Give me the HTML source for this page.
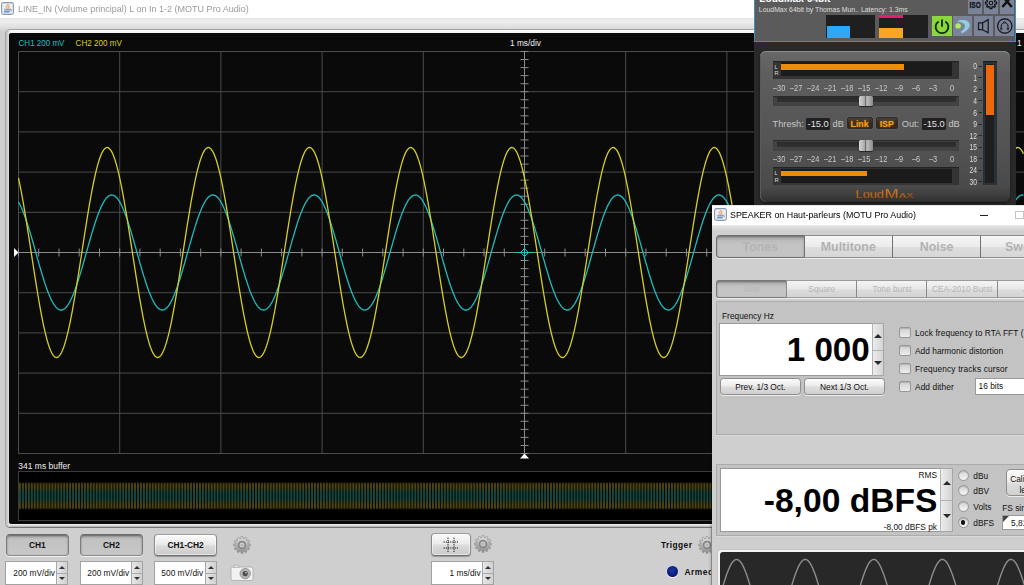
<!DOCTYPE html>
<html><head><meta charset="utf-8"><title>scope</title>
<style>
*{box-sizing:border-box;margin:0;padding:0}
html,body{width:1024px;height:585px;overflow:hidden;background:#cfcfcf;font-family:"Liberation Sans",sans-serif;font-size:8.35px;color:#111}
.abs{position:absolute}
#main{position:absolute;left:0;top:0;width:1024px;height:585px;background:#cfcfcf}
#mtitle{position:absolute;left:0;top:0;width:1024px;height:18px;background:#fff}
#mtitle .t{position:absolute;left:18px;top:3.2px;font-size:9.6px;color:#9a9a9a;white-space:nowrap;transform:scaleX(.94);transform-origin:0 0}
#mband{position:absolute;left:0;top:18px;width:1024px;height:14px;background:linear-gradient(#e4e4e4 0,#eeeeee 20%,#e2e2e2 60%,#d6d6d6 85%,#cfcfcf 100%)}
#spanel{position:absolute;left:5px;top:29px;width:1030px;height:499px;border-radius:5px;background:linear-gradient(90deg,#bcbcbc 0,#e0e0e0 3px,rgba(224,224,224,0) 5px),linear-gradient(#fafafa,#f4f4f4 3px,#e4e4e4 6px,#e4e4e4 488px,#f4f4f4 493.6px,#f0f0f0 494.4px,#b2b2b2 497px);border:1px solid #a4a4a4;border-bottom-color:#747474}
#sblack{position:absolute;left:9px;top:33px;width:1020px;height:491px;border-radius:3px;background:#0a0a0a;overflow:hidden}
svg.scope{position:absolute;left:0;top:0}
.st{font-family:"Liberation Sans",sans-serif;font-size:8.35px}
.btn{position:absolute;border:1px solid #8e8e8e;border-color:#9c9c9c #8c8c8c #707070;border-radius:4px;background:linear-gradient(#fbfbfb,#ebebeb 45%,#dbdbdb 55%,#cacaca);box-shadow:0 1px 1px rgba(0,0,0,.28), inset 0 0 0 1px rgba(255,255,255,.5);text-align:center;font-weight:bold;font-size:8.4px;color:#111;white-space:nowrap}
.btn.on{background:linear-gradient(#a4a4a4,#c2c2c2 22%,#c7c7c7);border-color:#6c6c6c #7c7c7c #8a8a8a;box-shadow:0 1px 0 #f2f2f2, inset 0 1px 2px rgba(0,0,0,.4)}
.spin{position:absolute;background:#fff;border:1px solid #a2a2a2;font-size:8.35px;white-space:nowrap}
.spin .v{position:absolute;right:12.4px;top:0;bottom:0;display:flex;align-items:center}
.spin .ar{position:absolute;right:0;top:0;bottom:0;width:11px;background:linear-gradient(90deg,#e8e8e8,#d0d0d0);border-left:1px solid #a8a8a8}
.spin .ar:before{content:"";position:absolute;left:0;right:0;top:50%;border-top:1px solid #a8a8a8}
.spin .ar i{position:absolute;left:2px;width:0;height:0;border-left:3px solid transparent;border-right:3px solid transparent}
.spin .ar i.u{top:26%;border-bottom:3.5px solid #333;margin-top:-2px}
.spin .ar i.d{top:76%;border-top:3.5px solid #333;margin-top:-2px}
</style></head><body>
<div id="main">
 <div id="mtitle">
  <svg class="abs" style="left:1px;top:2px" width="13" height="13" viewBox="0 0 13 13"><rect x="0.6" y="0.6" width="11.8" height="11.8" rx="1.8" fill="#e9f0f8" stroke="#8d99a8" stroke-width="1.1"/><path d="M6.6 1.4 C8.8 2.8 9.4 4.8 8 6.4 C6.6 7.2 4.4 6.4 4.6 4.6 C4.8 3.2 6.2 2.8 6.6 1.4Z" fill="#ecb485"/><path d="M5.8 3.6 C6.8 4.2 6.8 5 6.2 5.8" stroke="#fbe6d2" stroke-width=".7" fill="none"/><path d="M3.2 7.3 H9.6 C10.8 7.4 10.6 9 9.4 9.2" stroke="#6d737c" stroke-width=".8" fill="none"/><path d="M3.4 8.5 H9 L8.4 10.4 H2.8Z" fill="#6f91cc"/></svg>
  <div class="t">LINE_IN (Volume principal) L on In 1-2 (MOTU Pro Audio)</div>
 </div>
 <div id="mband"></div>
 <div id="spanel"></div>
 <div id="sblack">
 <svg class="scope" width="1015" height="491" viewBox="9 33 1015 491">
<rect x="9" y="33" width="1015" height="491" fill="#0a0a0a"/>
<path d="M18.5 51.5 V453.5 M119.7 51.5 V453.5 M220.9 51.5 V453.5 M322.1 51.5 V453.5 M423.3 51.5 V453.5 M625.7 51.5 V453.5 M726.9 51.5 V453.5 M828.1 51.5 V453.5 M929.3 51.5 V453.5 M1030.5 51.5 V453.5 M18.5 51.5 H1024 M18.5 91.7 H1024 M18.5 131.9 H1024 M18.5 172.1 H1024 M18.5 212.3 H1024 M18.5 292.7 H1024 M18.5 332.9 H1024 M18.5 373.1 H1024 M18.5 413.3 H1024 M18.5 453.5 H1024" stroke="#4b4b4b" stroke-width="1" fill="none"/>
<path d="M524.5 51.5 V453.5 M18.5 252.5 H1024 M520.5 51.5 h8 M520.5 59.5 h8 M520.5 67.6 h8 M520.5 75.6 h8 M520.5 83.7 h8 M520.5 91.7 h8 M520.5 99.7 h8 M520.5 107.8 h8 M520.5 115.8 h8 M520.5 123.9 h8 M520.5 131.9 h8 M520.5 139.9 h8 M520.5 148.0 h8 M520.5 156.0 h8 M520.5 164.1 h8 M520.5 172.1 h8 M520.5 180.1 h8 M520.5 188.2 h8 M520.5 196.2 h8 M520.5 204.3 h8 M520.5 212.3 h8 M520.5 220.3 h8 M520.5 228.4 h8 M520.5 236.4 h8 M520.5 244.5 h8 M520.5 252.5 h8 M520.5 260.5 h8 M520.5 268.6 h8 M520.5 276.6 h8 M520.5 284.7 h8 M520.5 292.7 h8 M520.5 300.7 h8 M520.5 308.8 h8 M520.5 316.8 h8 M520.5 324.9 h8 M520.5 332.9 h8 M520.5 340.9 h8 M520.5 349.0 h8 M520.5 357.0 h8 M520.5 365.1 h8 M520.5 373.1 h8 M520.5 381.1 h8 M520.5 389.2 h8 M520.5 397.2 h8 M520.5 405.3 h8 M520.5 413.3 h8 M520.5 421.3 h8 M520.5 429.4 h8 M520.5 437.4 h8 M520.5 445.5 h8 M520.5 453.5 h8 M18.5 248.5 v8 M38.7 248.5 v8 M59.0 248.5 v8 M79.2 248.5 v8 M99.5 248.5 v8 M119.7 248.5 v8 M139.9 248.5 v8 M160.2 248.5 v8 M180.4 248.5 v8 M200.7 248.5 v8 M220.9 248.5 v8 M241.1 248.5 v8 M261.4 248.5 v8 M281.6 248.5 v8 M301.9 248.5 v8 M322.1 248.5 v8 M342.3 248.5 v8 M362.6 248.5 v8 M382.8 248.5 v8 M403.1 248.5 v8 M423.3 248.5 v8 M443.5 248.5 v8 M463.8 248.5 v8 M484.0 248.5 v8 M504.3 248.5 v8 M524.5 248.5 v8 M544.7 248.5 v8 M565.0 248.5 v8 M585.2 248.5 v8 M605.5 248.5 v8 M625.7 248.5 v8 M645.9 248.5 v8 M666.2 248.5 v8 M686.4 248.5 v8 M706.7 248.5 v8 M726.9 248.5 v8 M747.1 248.5 v8 M767.4 248.5 v8 M787.6 248.5 v8 M807.9 248.5 v8 M828.1 248.5 v8 M848.3 248.5 v8 M868.6 248.5 v8 M888.8 248.5 v8 M909.1 248.5 v8 M929.3 248.5 v8 M949.5 248.5 v8 M969.8 248.5 v8 M990.0 248.5 v8 M1010.3 248.5 v8 M1030.5 248.5 v8" stroke="#8a8a8a" stroke-width="1" fill="none"/>
<path d="M18.5 201.9 L19.5 203.7 L20.5 205.7 L21.5 207.9 L22.5 210.2 L23.5 212.7 L24.5 215.4 L25.5 218.2 L26.5 221.1 L27.5 224.2 L28.5 227.3 L29.5 230.6 L30.5 233.9 L31.5 237.3 L32.5 240.8 L33.5 244.3 L34.5 247.9 L35.5 251.4 L36.5 255.0 L37.5 258.6 L38.5 262.1 L39.5 265.6 L40.5 269.0 L41.5 272.4 L42.5 275.7 L43.5 279.0 L44.5 282.1 L45.5 285.1 L46.5 288.0 L47.5 290.7 L48.5 293.3 L49.5 295.7 L50.5 298.0 L51.5 300.1 L52.5 302.0 L53.5 303.7 L54.5 305.2 L55.5 306.6 L56.5 307.7 L57.5 308.6 L58.5 309.3 L59.5 309.7 L60.5 310.0 L61.5 310.0 L62.5 309.8 L63.5 309.4 L64.5 308.7 L65.5 307.9 L66.5 306.8 L67.5 305.5 L68.5 304.0 L69.5 302.4 L70.5 300.5 L71.5 298.4 L72.5 296.2 L73.5 293.8 L74.5 291.2 L75.5 288.5 L76.5 285.7 L77.5 282.7 L78.5 279.6 L79.5 276.4 L80.5 273.1 L81.5 269.7 L82.5 266.3 L83.5 262.8 L84.5 259.3 L85.5 255.7 L86.5 252.1 L87.5 248.6 L88.5 245.0 L89.5 241.5 L90.5 238.0 L91.5 234.6 L92.5 231.2 L93.5 228.0 L94.5 224.8 L95.5 221.7 L96.5 218.8 L97.5 215.9 L98.5 213.3 L99.5 210.7 L100.5 208.4 L101.5 206.1 L102.5 204.1 L103.5 202.3 L104.5 200.7 L105.5 199.2 L106.5 198.0 L107.5 196.9 L108.5 196.1 L109.5 195.5 L110.5 195.2 L111.5 195.0 L112.5 195.1 L113.5 195.4 L114.5 195.9 L115.5 196.6 L116.5 197.5 L117.5 198.7 L118.5 200.0 L119.5 201.6 L120.5 203.4 L121.5 205.3 L122.5 207.4 L123.5 209.8 L124.5 212.2 L125.5 214.8 L126.5 217.6 L127.5 220.5 L128.5 223.5 L129.5 226.7 L130.5 229.9 L131.5 233.2 L132.5 236.6 L133.5 240.1 L134.5 243.6 L135.5 247.2 L136.5 250.7 L137.5 254.3 L138.5 257.8 L139.5 261.4 L140.5 264.9 L141.5 268.4 L142.5 271.8 L143.5 275.1 L144.5 278.3 L145.5 281.5 L146.5 284.5 L147.5 287.4 L148.5 290.2 L149.5 292.8 L150.5 295.2 L151.5 297.6 L152.5 299.7 L153.5 301.6 L154.5 303.4 L155.5 305.0 L156.5 306.3 L157.5 307.5 L158.5 308.4 L159.5 309.1 L160.5 309.6 L161.5 309.9 L162.5 310.0 L163.5 309.8 L164.5 309.5 L165.5 308.9 L166.5 308.1 L167.5 307.0 L168.5 305.8 L169.5 304.3 L170.5 302.7 L171.5 300.9 L172.5 298.9 L173.5 296.6 L174.5 294.3 L175.5 291.7 L176.5 289.1 L177.5 286.2 L178.5 283.3 L179.5 280.2 L180.5 277.0 L181.5 273.8 L182.5 270.4 L183.5 267.0 L184.5 263.5 L185.5 260.0 L186.5 256.4 L187.5 252.9 L188.5 249.3 L189.5 245.7 L190.5 242.2 L191.5 238.7 L192.5 235.3 L193.5 231.9 L194.5 228.6 L195.5 225.4 L196.5 222.3 L197.5 219.3 L198.5 216.5 L199.5 213.8 L200.5 211.2 L201.5 208.8 L202.5 206.6 L203.5 204.5 L204.5 202.6 L205.5 201.0 L206.5 199.5 L207.5 198.2 L208.5 197.1 L209.5 196.3 L210.5 195.6 L211.5 195.2 L212.5 195.0 L213.5 195.0 L214.5 195.3 L215.5 195.7 L216.5 196.4 L217.5 197.3 L218.5 198.4 L219.5 199.8 L220.5 201.3 L221.5 203.0 L222.5 204.9 L223.5 207.0 L224.5 209.3 L225.5 211.7 L226.5 214.3 L227.5 217.0 L228.5 219.9 L229.5 222.9 L230.5 226.0 L231.5 229.3 L232.5 232.6 L233.5 236.0 L234.5 239.4 L235.5 242.9 L236.5 246.4 L237.5 250.0 L238.5 253.6 L239.5 257.1 L240.5 260.7 L241.5 264.2 L242.5 267.7 L243.5 271.1 L244.5 274.4 L245.5 277.7 L246.5 280.8 L247.5 283.9 L248.5 286.8 L249.5 289.6 L250.5 292.3 L251.5 294.8 L252.5 297.1 L253.5 299.3 L254.5 301.3 L255.5 303.1 L256.5 304.7 L257.5 306.1 L258.5 307.3 L259.5 308.2 L260.5 309.0 L261.5 309.6 L262.5 309.9 L263.5 310.0 L264.5 309.9 L265.5 309.6 L266.5 309.0 L267.5 308.2 L268.5 307.3 L269.5 306.1 L270.5 304.7 L271.5 303.1 L272.5 301.3 L273.5 299.3 L274.5 297.1 L275.5 294.8 L276.5 292.3 L277.5 289.6 L278.5 286.8 L279.5 283.9 L280.5 280.8 L281.5 277.7 L282.5 274.4 L283.5 271.1 L284.5 267.7 L285.5 264.2 L286.5 260.7 L287.5 257.1 L288.5 253.6 L289.5 250.0 L290.5 246.4 L291.5 242.9 L292.5 239.4 L293.5 236.0 L294.5 232.6 L295.5 229.3 L296.5 226.0 L297.5 222.9 L298.5 219.9 L299.5 217.0 L300.5 214.3 L301.5 211.7 L302.5 209.3 L303.5 207.0 L304.5 204.9 L305.5 203.0 L306.5 201.3 L307.5 199.8 L308.5 198.4 L309.5 197.3 L310.5 196.4 L311.5 195.7 L312.5 195.3 L313.5 195.0 L314.5 195.0 L315.5 195.2 L316.5 195.6 L317.5 196.3 L318.5 197.1 L319.5 198.2 L320.5 199.5 L321.5 201.0 L322.5 202.6 L323.5 204.5 L324.5 206.6 L325.5 208.8 L326.5 211.2 L327.5 213.8 L328.5 216.5 L329.5 219.3 L330.5 222.3 L331.5 225.4 L332.5 228.6 L333.5 231.9 L334.5 235.3 L335.5 238.7 L336.5 242.2 L337.5 245.7 L338.5 249.3 L339.5 252.9 L340.5 256.4 L341.5 260.0 L342.5 263.5 L343.5 267.0 L344.5 270.4 L345.5 273.8 L346.5 277.0 L347.5 280.2 L348.5 283.3 L349.5 286.2 L350.5 289.1 L351.5 291.7 L352.5 294.3 L353.5 296.6 L354.5 298.9 L355.5 300.9 L356.5 302.7 L357.5 304.3 L358.5 305.8 L359.5 307.0 L360.5 308.1 L361.5 308.9 L362.5 309.5 L363.5 309.8 L364.5 310.0 L365.5 309.9 L366.5 309.6 L367.5 309.1 L368.5 308.4 L369.5 307.5 L370.5 306.3 L371.5 305.0 L372.5 303.4 L373.5 301.6 L374.5 299.7 L375.5 297.6 L376.5 295.2 L377.5 292.8 L378.5 290.2 L379.5 287.4 L380.5 284.5 L381.5 281.5 L382.5 278.3 L383.5 275.1 L384.5 271.8 L385.5 268.4 L386.5 264.9 L387.5 261.4 L388.5 257.8 L389.5 254.3 L390.5 250.7 L391.5 247.2 L392.5 243.6 L393.5 240.1 L394.5 236.6 L395.5 233.2 L396.5 229.9 L397.5 226.7 L398.5 223.5 L399.5 220.5 L400.5 217.6 L401.5 214.8 L402.5 212.2 L403.5 209.8 L404.5 207.4 L405.5 205.3 L406.5 203.4 L407.5 201.6 L408.5 200.0 L409.5 198.7 L410.5 197.5 L411.5 196.6 L412.5 195.9 L413.5 195.4 L414.5 195.1 L415.5 195.0 L416.5 195.2 L417.5 195.5 L418.5 196.1 L419.5 196.9 L420.5 198.0 L421.5 199.2 L422.5 200.7 L423.5 202.3 L424.5 204.1 L425.5 206.1 L426.5 208.4 L427.5 210.7 L428.5 213.3 L429.5 215.9 L430.5 218.8 L431.5 221.7 L432.5 224.8 L433.5 228.0 L434.5 231.2 L435.5 234.6 L436.5 238.0 L437.5 241.5 L438.5 245.0 L439.5 248.6 L440.5 252.1 L441.5 255.7 L442.5 259.3 L443.5 262.8 L444.5 266.3 L445.5 269.7 L446.5 273.1 L447.5 276.4 L448.5 279.6 L449.5 282.7 L450.5 285.7 L451.5 288.5 L452.5 291.2 L453.5 293.8 L454.5 296.2 L455.5 298.4 L456.5 300.5 L457.5 302.4 L458.5 304.0 L459.5 305.5 L460.5 306.8 L461.5 307.9 L462.5 308.7 L463.5 309.4 L464.5 309.8 L465.5 310.0 L466.5 310.0 L467.5 309.7 L468.5 309.3 L469.5 308.6 L470.5 307.7 L471.5 306.6 L472.5 305.2 L473.5 303.7 L474.5 302.0 L475.5 300.1 L476.5 298.0 L477.5 295.7 L478.5 293.3 L479.5 290.7 L480.5 288.0 L481.5 285.1 L482.5 282.1 L483.5 279.0 L484.5 275.7 L485.5 272.4 L486.5 269.0 L487.5 265.6 L488.5 262.1 L489.5 258.6 L490.5 255.0 L491.5 251.4 L492.5 247.9 L493.5 244.3 L494.5 240.8 L495.5 237.3 L496.5 233.9 L497.5 230.6 L498.5 227.3 L499.5 224.2 L500.5 221.1 L501.5 218.2 L502.5 215.4 L503.5 212.7 L504.5 210.2 L505.5 207.9 L506.5 205.7 L507.5 203.7 L508.5 201.9 L509.5 200.3 L510.5 198.9 L511.5 197.7 L512.5 196.8 L513.5 196.0 L514.5 195.4 L515.5 195.1 L516.5 195.0 L517.5 195.1 L518.5 195.4 L519.5 196.0 L520.5 196.8 L521.5 197.7 L522.5 198.9 L523.5 200.3 L524.5 201.9 L525.5 203.7 L526.5 205.7 L527.5 207.9 L528.5 210.2 L529.5 212.7 L530.5 215.4 L531.5 218.2 L532.5 221.1 L533.5 224.2 L534.5 227.3 L535.5 230.6 L536.5 233.9 L537.5 237.3 L538.5 240.8 L539.5 244.3 L540.5 247.9 L541.5 251.4 L542.5 255.0 L543.5 258.6 L544.5 262.1 L545.5 265.6 L546.5 269.0 L547.5 272.4 L548.5 275.7 L549.5 279.0 L550.5 282.1 L551.5 285.1 L552.5 288.0 L553.5 290.7 L554.5 293.3 L555.5 295.7 L556.5 298.0 L557.5 300.1 L558.5 302.0 L559.5 303.7 L560.5 305.2 L561.5 306.6 L562.5 307.7 L563.5 308.6 L564.5 309.3 L565.5 309.7 L566.5 310.0 L567.5 310.0 L568.5 309.8 L569.5 309.4 L570.5 308.7 L571.5 307.9 L572.5 306.8 L573.5 305.5 L574.5 304.0 L575.5 302.4 L576.5 300.5 L577.5 298.4 L578.5 296.2 L579.5 293.8 L580.5 291.2 L581.5 288.5 L582.5 285.7 L583.5 282.7 L584.5 279.6 L585.5 276.4 L586.5 273.1 L587.5 269.7 L588.5 266.3 L589.5 262.8 L590.5 259.3 L591.5 255.7 L592.5 252.1 L593.5 248.6 L594.5 245.0 L595.5 241.5 L596.5 238.0 L597.5 234.6 L598.5 231.2 L599.5 228.0 L600.5 224.8 L601.5 221.7 L602.5 218.8 L603.5 215.9 L604.5 213.3 L605.5 210.7 L606.5 208.4 L607.5 206.1 L608.5 204.1 L609.5 202.3 L610.5 200.7 L611.5 199.2 L612.5 198.0 L613.5 196.9 L614.5 196.1 L615.5 195.5 L616.5 195.2 L617.5 195.0 L618.5 195.1 L619.5 195.4 L620.5 195.9 L621.5 196.6 L622.5 197.5 L623.5 198.7 L624.5 200.0 L625.5 201.6 L626.5 203.4 L627.5 205.3 L628.5 207.4 L629.5 209.8 L630.5 212.2 L631.5 214.8 L632.5 217.6 L633.5 220.5 L634.5 223.5 L635.5 226.7 L636.5 229.9 L637.5 233.2 L638.5 236.6 L639.5 240.1 L640.5 243.6 L641.5 247.2 L642.5 250.7 L643.5 254.3 L644.5 257.8 L645.5 261.4 L646.5 264.9 L647.5 268.4 L648.5 271.8 L649.5 275.1 L650.5 278.3 L651.5 281.5 L652.5 284.5 L653.5 287.4 L654.5 290.2 L655.5 292.8 L656.5 295.2 L657.5 297.6 L658.5 299.7 L659.5 301.6 L660.5 303.4 L661.5 305.0 L662.5 306.3 L663.5 307.5 L664.5 308.4 L665.5 309.1 L666.5 309.6 L667.5 309.9 L668.5 310.0 L669.5 309.8 L670.5 309.5 L671.5 308.9 L672.5 308.1 L673.5 307.0 L674.5 305.8 L675.5 304.3 L676.5 302.7 L677.5 300.9 L678.5 298.9 L679.5 296.6 L680.5 294.3 L681.5 291.7 L682.5 289.1 L683.5 286.2 L684.5 283.3 L685.5 280.2 L686.5 277.0 L687.5 273.8 L688.5 270.4 L689.5 267.0 L690.5 263.5 L691.5 260.0 L692.5 256.4 L693.5 252.9 L694.5 249.3 L695.5 245.7 L696.5 242.2 L697.5 238.7 L698.5 235.3 L699.5 231.9 L700.5 228.6 L701.5 225.4 L702.5 222.3 L703.5 219.3 L704.5 216.5 L705.5 213.8 L706.5 211.2 L707.5 208.8 L708.5 206.6 L709.5 204.5 L710.5 202.6 L711.5 201.0 L712.5 199.5 L713.5 198.2 L714.5 197.1 L715.5 196.3 L716.5 195.6 L717.5 195.2 L718.5 195.0 L719.5 195.0 L720.5 195.3 L721.5 195.7 L722.5 196.4 L723.5 197.3 L724.5 198.4 L725.5 199.8 L726.5 201.3 L727.5 203.0 L728.5 204.9 L729.5 207.0 L730.5 209.3 L731.5 211.7 L732.5 214.3 L733.5 217.0 L734.5 219.9 L735.5 222.9 L736.5 226.0 L737.5 229.3 L738.5 232.6 L739.5 236.0 L740.5 239.4 L741.5 242.9 L742.5 246.4 L743.5 250.0 L744.5 253.6 L745.5 257.1 L746.5 260.7 L747.5 264.2 L748.5 267.7 L749.5 271.1 L750.5 274.4 L751.5 277.7 L752.5 280.8 L753.5 283.9 L754.5 286.8 L755.5 289.6 L756.5 292.3 L757.5 294.8 L758.5 297.1 L759.5 299.3 L760.5 301.3 L761.5 303.1 L762.5 304.7 L763.5 306.1 L764.5 307.3 L765.5 308.2 L766.5 309.0 L767.5 309.6 L768.5 309.9 L769.5 310.0 L770.5 309.9 L771.5 309.6 L772.5 309.0 L773.5 308.2 L774.5 307.3 L775.5 306.1 L776.5 304.7 L777.5 303.1 L778.5 301.3 L779.5 299.3 L780.5 297.1 L781.5 294.8 L782.5 292.3 L783.5 289.6 L784.5 286.8 L785.5 283.9 L786.5 280.8 L787.5 277.7 L788.5 274.4 L789.5 271.1 L790.5 267.7 L791.5 264.2 L792.5 260.7 L793.5 257.1 L794.5 253.6 L795.5 250.0 L796.5 246.4 L797.5 242.9 L798.5 239.4 L799.5 236.0 L800.5 232.6 L801.5 229.3 L802.5 226.0 L803.5 222.9 L804.5 219.9 L805.5 217.0 L806.5 214.3 L807.5 211.7 L808.5 209.3 L809.5 207.0 L810.5 204.9 L811.5 203.0 L812.5 201.3 L813.5 199.8 L814.5 198.4 L815.5 197.3 L816.5 196.4 L817.5 195.7 L818.5 195.3 L819.5 195.0 L820.5 195.0 L821.5 195.2 L822.5 195.6 L823.5 196.3 L824.5 197.1 L825.5 198.2 L826.5 199.5 L827.5 201.0 L828.5 202.6 L829.5 204.5 L830.5 206.6 L831.5 208.8 L832.5 211.2 L833.5 213.8 L834.5 216.5 L835.5 219.3 L836.5 222.3 L837.5 225.4 L838.5 228.6 L839.5 231.9 L840.5 235.3 L841.5 238.7 L842.5 242.2 L843.5 245.7 L844.5 249.3 L845.5 252.9 L846.5 256.4 L847.5 260.0 L848.5 263.5 L849.5 267.0 L850.5 270.4 L851.5 273.8 L852.5 277.0 L853.5 280.2 L854.5 283.3 L855.5 286.2 L856.5 289.1 L857.5 291.7 L858.5 294.3 L859.5 296.6 L860.5 298.9 L861.5 300.9 L862.5 302.7 L863.5 304.3 L864.5 305.8 L865.5 307.0 L866.5 308.1 L867.5 308.9 L868.5 309.5 L869.5 309.8 L870.5 310.0 L871.5 309.9 L872.5 309.6 L873.5 309.1 L874.5 308.4 L875.5 307.5 L876.5 306.3 L877.5 305.0 L878.5 303.4 L879.5 301.6 L880.5 299.7 L881.5 297.6 L882.5 295.2 L883.5 292.8 L884.5 290.2 L885.5 287.4 L886.5 284.5 L887.5 281.5 L888.5 278.3 L889.5 275.1 L890.5 271.8 L891.5 268.4 L892.5 264.9 L893.5 261.4 L894.5 257.8 L895.5 254.3 L896.5 250.7 L897.5 247.2 L898.5 243.6 L899.5 240.1 L900.5 236.6 L901.5 233.2 L902.5 229.9 L903.5 226.7 L904.5 223.5 L905.5 220.5 L906.5 217.6 L907.5 214.8 L908.5 212.2 L909.5 209.8 L910.5 207.4 L911.5 205.3 L912.5 203.4 L913.5 201.6 L914.5 200.0 L915.5 198.7 L916.5 197.5 L917.5 196.6 L918.5 195.9 L919.5 195.4 L920.5 195.1 L921.5 195.0 L922.5 195.2 L923.5 195.5 L924.5 196.1 L925.5 196.9 L926.5 198.0 L927.5 199.2 L928.5 200.7 L929.5 202.3 L930.5 204.1 L931.5 206.1 L932.5 208.4 L933.5 210.7 L934.5 213.3 L935.5 215.9 L936.5 218.8 L937.5 221.7 L938.5 224.8 L939.5 228.0 L940.5 231.2 L941.5 234.6 L942.5 238.0 L943.5 241.5 L944.5 245.0 L945.5 248.6 L946.5 252.1 L947.5 255.7 L948.5 259.3 L949.5 262.8 L950.5 266.3 L951.5 269.7 L952.5 273.1 L953.5 276.4 L954.5 279.6 L955.5 282.7 L956.5 285.7 L957.5 288.5 L958.5 291.2 L959.5 293.8 L960.5 296.2 L961.5 298.4 L962.5 300.5 L963.5 302.4 L964.5 304.0 L965.5 305.5 L966.5 306.8 L967.5 307.9 L968.5 308.7 L969.5 309.4 L970.5 309.8 L971.5 310.0 L972.5 310.0 L973.5 309.7 L974.5 309.3 L975.5 308.6 L976.5 307.7 L977.5 306.6 L978.5 305.2 L979.5 303.7 L980.5 302.0 L981.5 300.1 L982.5 298.0 L983.5 295.7 L984.5 293.3 L985.5 290.7 L986.5 288.0 L987.5 285.1 L988.5 282.1 L989.5 279.0 L990.5 275.7 L991.5 272.4 L992.5 269.0 L993.5 265.6 L994.5 262.1 L995.5 258.6 L996.5 255.0 L997.5 251.4 L998.5 247.9 L999.5 244.3 L1000.5 240.8 L1001.5 237.3 L1002.5 233.9 L1003.5 230.6 L1004.5 227.3 L1005.5 224.2 L1006.5 221.1 L1007.5 218.2 L1008.5 215.4 L1009.5 212.7 L1010.5 210.2 L1011.5 207.9 L1012.5 205.7 L1013.5 203.7 L1014.5 201.9 L1015.5 200.3 L1016.5 198.9 L1017.5 197.7 L1018.5 196.8 L1019.5 196.0 L1020.5 195.4 L1021.5 195.1 L1022.5 195.0 L1023.5 195.1" stroke="#1fbcbc" stroke-width="1.3" fill="none"/>
<path d="M18.5 178.0 L19.5 182.8 L20.5 187.8 L21.5 193.0 L22.5 198.5 L23.5 204.2 L24.5 210.1 L25.5 216.1 L26.5 222.3 L27.5 228.6 L28.5 235.0 L29.5 241.4 L30.5 247.9 L31.5 254.5 L32.5 261.0 L33.5 267.4 L34.5 273.9 L35.5 280.2 L36.5 286.4 L37.5 292.5 L38.5 298.5 L39.5 304.2 L40.5 309.8 L41.5 315.2 L42.5 320.3 L43.5 325.1 L44.5 329.7 L45.5 333.9 L46.5 337.9 L47.5 341.5 L48.5 344.8 L49.5 347.7 L50.5 350.3 L51.5 352.5 L52.5 354.3 L53.5 355.7 L54.5 356.7 L55.5 357.3 L56.5 357.5 L57.5 357.3 L58.5 356.7 L59.5 355.7 L60.5 354.3 L61.5 352.5 L62.5 350.3 L63.5 347.7 L64.5 344.8 L65.5 341.5 L66.5 337.9 L67.5 333.9 L68.5 329.7 L69.5 325.1 L70.5 320.3 L71.5 315.2 L72.5 309.8 L73.5 304.2 L74.5 298.5 L75.5 292.5 L76.5 286.4 L77.5 280.2 L78.5 273.9 L79.5 267.4 L80.5 261.0 L81.5 254.5 L82.5 247.9 L83.5 241.4 L84.5 235.0 L85.5 228.6 L86.5 222.3 L87.5 216.1 L88.5 210.1 L89.5 204.2 L90.5 198.5 L91.5 193.0 L92.5 187.8 L93.5 182.8 L94.5 178.0 L95.5 173.6 L96.5 169.4 L97.5 165.6 L98.5 162.1 L99.5 159.0 L100.5 156.2 L101.5 153.8 L102.5 151.8 L103.5 150.1 L104.5 148.9 L105.5 148.0 L106.5 147.6 L107.5 147.5 L108.5 147.9 L109.5 148.7 L110.5 149.8 L111.5 151.4 L112.5 153.3 L113.5 155.7 L114.5 158.4 L115.5 161.5 L116.5 164.9 L117.5 168.6 L118.5 172.7 L119.5 177.1 L120.5 181.8 L121.5 186.7 L122.5 191.9 L123.5 197.4 L124.5 203.0 L125.5 208.9 L126.5 214.9 L127.5 221.0 L128.5 227.3 L129.5 233.7 L130.5 240.1 L131.5 246.6 L132.5 253.2 L133.5 259.7 L134.5 266.2 L135.5 272.6 L136.5 278.9 L137.5 285.2 L138.5 291.3 L139.5 297.3 L140.5 303.1 L141.5 308.7 L142.5 314.1 L143.5 319.3 L144.5 324.2 L145.5 328.8 L146.5 333.1 L147.5 337.1 L148.5 340.8 L149.5 344.2 L150.5 347.2 L151.5 349.8 L152.5 352.1 L153.5 354.0 L154.5 355.4 L155.5 356.5 L156.5 357.2 L157.5 357.5 L158.5 357.4 L159.5 356.8 L160.5 355.9 L161.5 354.6 L162.5 352.9 L163.5 350.8 L164.5 348.3 L165.5 345.4 L166.5 342.2 L167.5 338.7 L168.5 334.8 L169.5 330.6 L170.5 326.1 L171.5 321.3 L172.5 316.2 L173.5 310.9 L174.5 305.4 L175.5 299.6 L176.5 293.7 L177.5 287.7 L178.5 281.5 L179.5 275.1 L180.5 268.7 L181.5 262.3 L182.5 255.8 L183.5 249.2 L184.5 242.7 L185.5 236.3 L186.5 229.9 L187.5 223.5 L188.5 217.3 L189.5 211.3 L190.5 205.4 L191.5 199.6 L192.5 194.1 L193.5 188.8 L194.5 183.7 L195.5 178.9 L196.5 174.4 L197.5 170.2 L198.5 166.3 L199.5 162.8 L200.5 159.6 L201.5 156.7 L202.5 154.2 L203.5 152.1 L204.5 150.4 L205.5 149.1 L206.5 148.2 L207.5 147.6 L208.5 147.5 L209.5 147.8 L210.5 148.5 L211.5 149.6 L212.5 151.0 L213.5 152.9 L214.5 155.2 L215.5 157.8 L216.5 160.8 L217.5 164.2 L218.5 167.9 L219.5 171.9 L220.5 176.2 L221.5 180.8 L222.5 185.7 L223.5 190.9 L224.5 196.3 L225.5 201.9 L226.5 207.7 L227.5 213.7 L228.5 219.8 L229.5 226.1 L230.5 232.4 L231.5 238.8 L232.5 245.3 L233.5 251.8 L234.5 258.4 L235.5 264.9 L236.5 271.3 L237.5 277.7 L238.5 284.0 L239.5 290.1 L240.5 296.1 L241.5 302.0 L242.5 307.6 L243.5 313.1 L244.5 318.3 L245.5 323.2 L246.5 327.9 L247.5 332.3 L248.5 336.4 L249.5 340.1 L250.5 343.5 L251.5 346.6 L252.5 349.3 L253.5 351.7 L254.5 353.6 L255.5 355.2 L256.5 356.3 L257.5 357.1 L258.5 357.5 L259.5 357.4 L260.5 357.0 L261.5 356.1 L262.5 354.9 L263.5 353.2 L264.5 351.2 L265.5 348.8 L266.5 346.0 L267.5 342.9 L268.5 339.4 L269.5 335.6 L270.5 331.4 L271.5 327.0 L272.5 322.2 L273.5 317.2 L274.5 312.0 L275.5 306.5 L276.5 300.8 L277.5 294.9 L278.5 288.9 L279.5 282.7 L280.5 276.4 L281.5 270.0 L282.5 263.6 L283.5 257.1 L284.5 250.5 L285.5 244.0 L286.5 237.6 L287.5 231.1 L288.5 224.8 L289.5 218.6 L290.5 212.5 L291.5 206.5 L292.5 200.8 L293.5 195.2 L294.5 189.8 L295.5 184.7 L296.5 179.9 L297.5 175.3 L298.5 171.1 L299.5 167.1 L300.5 163.5 L301.5 160.2 L302.5 157.3 L303.5 154.7 L304.5 152.5 L305.5 150.7 L306.5 149.3 L307.5 148.3 L308.5 147.7 L309.5 147.5 L310.5 147.7 L311.5 148.3 L312.5 149.3 L313.5 150.7 L314.5 152.5 L315.5 154.7 L316.5 157.3 L317.5 160.2 L318.5 163.5 L319.5 167.1 L320.5 171.1 L321.5 175.3 L322.5 179.9 L323.5 184.7 L324.5 189.8 L325.5 195.2 L326.5 200.8 L327.5 206.5 L328.5 212.5 L329.5 218.6 L330.5 224.8 L331.5 231.1 L332.5 237.6 L333.5 244.0 L334.5 250.5 L335.5 257.1 L336.5 263.6 L337.5 270.0 L338.5 276.4 L339.5 282.7 L340.5 288.9 L341.5 294.9 L342.5 300.8 L343.5 306.5 L344.5 312.0 L345.5 317.2 L346.5 322.2 L347.5 327.0 L348.5 331.4 L349.5 335.6 L350.5 339.4 L351.5 342.9 L352.5 346.0 L353.5 348.8 L354.5 351.2 L355.5 353.2 L356.5 354.9 L357.5 356.1 L358.5 357.0 L359.5 357.4 L360.5 357.5 L361.5 357.1 L362.5 356.3 L363.5 355.2 L364.5 353.6 L365.5 351.7 L366.5 349.3 L367.5 346.6 L368.5 343.5 L369.5 340.1 L370.5 336.4 L371.5 332.3 L372.5 327.9 L373.5 323.2 L374.5 318.3 L375.5 313.1 L376.5 307.6 L377.5 302.0 L378.5 296.1 L379.5 290.1 L380.5 284.0 L381.5 277.7 L382.5 271.3 L383.5 264.9 L384.5 258.4 L385.5 251.8 L386.5 245.3 L387.5 238.8 L388.5 232.4 L389.5 226.1 L390.5 219.8 L391.5 213.7 L392.5 207.7 L393.5 201.9 L394.5 196.3 L395.5 190.9 L396.5 185.7 L397.5 180.8 L398.5 176.2 L399.5 171.9 L400.5 167.9 L401.5 164.2 L402.5 160.8 L403.5 157.8 L404.5 155.2 L405.5 152.9 L406.5 151.0 L407.5 149.6 L408.5 148.5 L409.5 147.8 L410.5 147.5 L411.5 147.6 L412.5 148.2 L413.5 149.1 L414.5 150.4 L415.5 152.1 L416.5 154.2 L417.5 156.7 L418.5 159.6 L419.5 162.8 L420.5 166.3 L421.5 170.2 L422.5 174.4 L423.5 178.9 L424.5 183.7 L425.5 188.8 L426.5 194.1 L427.5 199.6 L428.5 205.4 L429.5 211.3 L430.5 217.3 L431.5 223.5 L432.5 229.9 L433.5 236.3 L434.5 242.7 L435.5 249.2 L436.5 255.8 L437.5 262.3 L438.5 268.7 L439.5 275.1 L440.5 281.5 L441.5 287.7 L442.5 293.7 L443.5 299.6 L444.5 305.4 L445.5 310.9 L446.5 316.2 L447.5 321.3 L448.5 326.1 L449.5 330.6 L450.5 334.8 L451.5 338.7 L452.5 342.2 L453.5 345.4 L454.5 348.3 L455.5 350.8 L456.5 352.9 L457.5 354.6 L458.5 355.9 L459.5 356.8 L460.5 357.4 L461.5 357.5 L462.5 357.2 L463.5 356.5 L464.5 355.4 L465.5 354.0 L466.5 352.1 L467.5 349.8 L468.5 347.2 L469.5 344.2 L470.5 340.8 L471.5 337.1 L472.5 333.1 L473.5 328.8 L474.5 324.2 L475.5 319.3 L476.5 314.1 L477.5 308.7 L478.5 303.1 L479.5 297.3 L480.5 291.3 L481.5 285.2 L482.5 278.9 L483.5 272.6 L484.5 266.2 L485.5 259.7 L486.5 253.2 L487.5 246.6 L488.5 240.1 L489.5 233.7 L490.5 227.3 L491.5 221.0 L492.5 214.9 L493.5 208.9 L494.5 203.0 L495.5 197.4 L496.5 191.9 L497.5 186.7 L498.5 181.8 L499.5 177.1 L500.5 172.7 L501.5 168.6 L502.5 164.9 L503.5 161.5 L504.5 158.4 L505.5 155.7 L506.5 153.3 L507.5 151.4 L508.5 149.8 L509.5 148.7 L510.5 147.9 L511.5 147.5 L512.5 147.6 L513.5 148.0 L514.5 148.9 L515.5 150.1 L516.5 151.8 L517.5 153.8 L518.5 156.2 L519.5 159.0 L520.5 162.1 L521.5 165.6 L522.5 169.4 L523.5 173.6 L524.5 178.0 L525.5 182.8 L526.5 187.8 L527.5 193.0 L528.5 198.5 L529.5 204.2 L530.5 210.1 L531.5 216.1 L532.5 222.3 L533.5 228.6 L534.5 235.0 L535.5 241.4 L536.5 247.9 L537.5 254.5 L538.5 261.0 L539.5 267.4 L540.5 273.9 L541.5 280.2 L542.5 286.4 L543.5 292.5 L544.5 298.5 L545.5 304.2 L546.5 309.8 L547.5 315.2 L548.5 320.3 L549.5 325.1 L550.5 329.7 L551.5 333.9 L552.5 337.9 L553.5 341.5 L554.5 344.8 L555.5 347.7 L556.5 350.3 L557.5 352.5 L558.5 354.3 L559.5 355.7 L560.5 356.7 L561.5 357.3 L562.5 357.5 L563.5 357.3 L564.5 356.7 L565.5 355.7 L566.5 354.3 L567.5 352.5 L568.5 350.3 L569.5 347.7 L570.5 344.8 L571.5 341.5 L572.5 337.9 L573.5 333.9 L574.5 329.7 L575.5 325.1 L576.5 320.3 L577.5 315.2 L578.5 309.8 L579.5 304.2 L580.5 298.5 L581.5 292.5 L582.5 286.4 L583.5 280.2 L584.5 273.9 L585.5 267.4 L586.5 261.0 L587.5 254.5 L588.5 247.9 L589.5 241.4 L590.5 235.0 L591.5 228.6 L592.5 222.3 L593.5 216.1 L594.5 210.1 L595.5 204.2 L596.5 198.5 L597.5 193.0 L598.5 187.8 L599.5 182.8 L600.5 178.0 L601.5 173.6 L602.5 169.4 L603.5 165.6 L604.5 162.1 L605.5 159.0 L606.5 156.2 L607.5 153.8 L608.5 151.8 L609.5 150.1 L610.5 148.9 L611.5 148.0 L612.5 147.6 L613.5 147.5 L614.5 147.9 L615.5 148.7 L616.5 149.8 L617.5 151.4 L618.5 153.3 L619.5 155.7 L620.5 158.4 L621.5 161.5 L622.5 164.9 L623.5 168.6 L624.5 172.7 L625.5 177.1 L626.5 181.8 L627.5 186.7 L628.5 191.9 L629.5 197.4 L630.5 203.0 L631.5 208.9 L632.5 214.9 L633.5 221.0 L634.5 227.3 L635.5 233.7 L636.5 240.1 L637.5 246.6 L638.5 253.2 L639.5 259.7 L640.5 266.2 L641.5 272.6 L642.5 278.9 L643.5 285.2 L644.5 291.3 L645.5 297.3 L646.5 303.1 L647.5 308.7 L648.5 314.1 L649.5 319.3 L650.5 324.2 L651.5 328.8 L652.5 333.1 L653.5 337.1 L654.5 340.8 L655.5 344.2 L656.5 347.2 L657.5 349.8 L658.5 352.1 L659.5 354.0 L660.5 355.4 L661.5 356.5 L662.5 357.2 L663.5 357.5 L664.5 357.4 L665.5 356.8 L666.5 355.9 L667.5 354.6 L668.5 352.9 L669.5 350.8 L670.5 348.3 L671.5 345.4 L672.5 342.2 L673.5 338.7 L674.5 334.8 L675.5 330.6 L676.5 326.1 L677.5 321.3 L678.5 316.2 L679.5 310.9 L680.5 305.4 L681.5 299.6 L682.5 293.7 L683.5 287.7 L684.5 281.5 L685.5 275.1 L686.5 268.7 L687.5 262.3 L688.5 255.8 L689.5 249.2 L690.5 242.7 L691.5 236.3 L692.5 229.9 L693.5 223.5 L694.5 217.3 L695.5 211.3 L696.5 205.4 L697.5 199.6 L698.5 194.1 L699.5 188.8 L700.5 183.7 L701.5 178.9 L702.5 174.4 L703.5 170.2 L704.5 166.3 L705.5 162.8 L706.5 159.6 L707.5 156.7 L708.5 154.2 L709.5 152.1 L710.5 150.4 L711.5 149.1 L712.5 148.2 L713.5 147.6 L714.5 147.5 L715.5 147.8 L716.5 148.5 L717.5 149.6 L718.5 151.0 L719.5 152.9 L720.5 155.2 L721.5 157.8 L722.5 160.8 L723.5 164.2 L724.5 167.9 L725.5 171.9 L726.5 176.2 L727.5 180.8 L728.5 185.7 L729.5 190.9 L730.5 196.3 L731.5 201.9 L732.5 207.7 L733.5 213.7 L734.5 219.8 L735.5 226.1 L736.5 232.4 L737.5 238.8 L738.5 245.3 L739.5 251.8 L740.5 258.4 L741.5 264.9 L742.5 271.3 L743.5 277.7 L744.5 284.0 L745.5 290.1 L746.5 296.1 L747.5 302.0 L748.5 307.6 L749.5 313.1 L750.5 318.3 L751.5 323.2 L752.5 327.9 L753.5 332.3 L754.5 336.4 L755.5 340.1 L756.5 343.5 L757.5 346.6 L758.5 349.3 L759.5 351.7 L760.5 353.6 L761.5 355.2 L762.5 356.3 L763.5 357.1 L764.5 357.5 L765.5 357.4 L766.5 357.0 L767.5 356.1 L768.5 354.9 L769.5 353.2 L770.5 351.2 L771.5 348.8 L772.5 346.0 L773.5 342.9 L774.5 339.4 L775.5 335.6 L776.5 331.4 L777.5 327.0 L778.5 322.2 L779.5 317.2 L780.5 312.0 L781.5 306.5 L782.5 300.8 L783.5 294.9 L784.5 288.9 L785.5 282.7 L786.5 276.4 L787.5 270.0 L788.5 263.6 L789.5 257.1 L790.5 250.5 L791.5 244.0 L792.5 237.6 L793.5 231.1 L794.5 224.8 L795.5 218.6 L796.5 212.5 L797.5 206.5 L798.5 200.8 L799.5 195.2 L800.5 189.8 L801.5 184.7 L802.5 179.9 L803.5 175.3 L804.5 171.1 L805.5 167.1 L806.5 163.5 L807.5 160.2 L808.5 157.3 L809.5 154.7 L810.5 152.5 L811.5 150.7 L812.5 149.3 L813.5 148.3 L814.5 147.7 L815.5 147.5 L816.5 147.7 L817.5 148.3 L818.5 149.3 L819.5 150.7 L820.5 152.5 L821.5 154.7 L822.5 157.3 L823.5 160.2 L824.5 163.5 L825.5 167.1 L826.5 171.1 L827.5 175.3 L828.5 179.9 L829.5 184.7 L830.5 189.8 L831.5 195.2 L832.5 200.8 L833.5 206.5 L834.5 212.5 L835.5 218.6 L836.5 224.8 L837.5 231.1 L838.5 237.6 L839.5 244.0 L840.5 250.5 L841.5 257.1 L842.5 263.6 L843.5 270.0 L844.5 276.4 L845.5 282.7 L846.5 288.9 L847.5 294.9 L848.5 300.8 L849.5 306.5 L850.5 312.0 L851.5 317.2 L852.5 322.2 L853.5 327.0 L854.5 331.4 L855.5 335.6 L856.5 339.4 L857.5 342.9 L858.5 346.0 L859.5 348.8 L860.5 351.2 L861.5 353.2 L862.5 354.9 L863.5 356.1 L864.5 357.0 L865.5 357.4 L866.5 357.5 L867.5 357.1 L868.5 356.3 L869.5 355.2 L870.5 353.6 L871.5 351.7 L872.5 349.3 L873.5 346.6 L874.5 343.5 L875.5 340.1 L876.5 336.4 L877.5 332.3 L878.5 327.9 L879.5 323.2 L880.5 318.3 L881.5 313.1 L882.5 307.6 L883.5 302.0 L884.5 296.1 L885.5 290.1 L886.5 284.0 L887.5 277.7 L888.5 271.3 L889.5 264.9 L890.5 258.4 L891.5 251.8 L892.5 245.3 L893.5 238.8 L894.5 232.4 L895.5 226.1 L896.5 219.8 L897.5 213.7 L898.5 207.7 L899.5 201.9 L900.5 196.3 L901.5 190.9 L902.5 185.7 L903.5 180.8 L904.5 176.2 L905.5 171.9 L906.5 167.9 L907.5 164.2 L908.5 160.8 L909.5 157.8 L910.5 155.2 L911.5 152.9 L912.5 151.0 L913.5 149.6 L914.5 148.5 L915.5 147.8 L916.5 147.5 L917.5 147.6 L918.5 148.2 L919.5 149.1 L920.5 150.4 L921.5 152.1 L922.5 154.2 L923.5 156.7 L924.5 159.6 L925.5 162.8 L926.5 166.3 L927.5 170.2 L928.5 174.4 L929.5 178.9 L930.5 183.7 L931.5 188.8 L932.5 194.1 L933.5 199.6 L934.5 205.4 L935.5 211.3 L936.5 217.3 L937.5 223.5 L938.5 229.9 L939.5 236.3 L940.5 242.7 L941.5 249.2 L942.5 255.8 L943.5 262.3 L944.5 268.7 L945.5 275.1 L946.5 281.5 L947.5 287.7 L948.5 293.7 L949.5 299.6 L950.5 305.4 L951.5 310.9 L952.5 316.2 L953.5 321.3 L954.5 326.1 L955.5 330.6 L956.5 334.8 L957.5 338.7 L958.5 342.2 L959.5 345.4 L960.5 348.3 L961.5 350.8 L962.5 352.9 L963.5 354.6 L964.5 355.9 L965.5 356.8 L966.5 357.4 L967.5 357.5 L968.5 357.2 L969.5 356.5 L970.5 355.4 L971.5 354.0 L972.5 352.1 L973.5 349.8 L974.5 347.2 L975.5 344.2 L976.5 340.8 L977.5 337.1 L978.5 333.1 L979.5 328.8 L980.5 324.2 L981.5 319.3 L982.5 314.1 L983.5 308.7 L984.5 303.1 L985.5 297.3 L986.5 291.3 L987.5 285.2 L988.5 278.9 L989.5 272.6 L990.5 266.2 L991.5 259.7 L992.5 253.2 L993.5 246.6 L994.5 240.1 L995.5 233.7 L996.5 227.3 L997.5 221.0 L998.5 214.9 L999.5 208.9 L1000.5 203.0 L1001.5 197.4 L1002.5 191.9 L1003.5 186.7 L1004.5 181.8 L1005.5 177.1 L1006.5 172.7 L1007.5 168.6 L1008.5 164.9 L1009.5 161.5 L1010.5 158.4 L1011.5 155.7 L1012.5 153.3 L1013.5 151.4 L1014.5 149.8 L1015.5 148.7 L1016.5 147.9 L1017.5 147.5 L1018.5 147.6 L1019.5 148.0 L1020.5 148.9 L1021.5 150.1 L1022.5 151.8 L1023.5 153.8" stroke="#d6cf22" stroke-width="1.3" fill="none"/>
<path d="M14 248.0 L18.5 252.5 L14 257.0 Z" fill="#fff"/>
<path d="M524.5 453.5 L529.0 458.5 L520.0 458.5 Z" fill="#fff"/>
<path d="M524.5 248.5 l4 4 l-4 4 l-4 -4 Z M516.5 252.5 h16 M524.5 244.5 v16" stroke="#1fc8c8" stroke-width="1" fill="none"/>
<text x="18.6" y="45.6" fill="#1fc0c0" class="st" textLength="45.8" lengthAdjust="spacingAndGlyphs">CH1 200 mV</text>
<text x="75.6" y="45.6" fill="#d6cf22" class="st" textLength="46.3" lengthAdjust="spacingAndGlyphs">CH2 200 mV</text>
<text x="525.5" y="45.6" fill="#eee" class="st" text-anchor="middle">1 ms/div</text>
<text x="1017" y="45.6" fill="#eee" class="st">1</text>
<text x="18.3" y="468.5" fill="#eee" class="st" textLength="51.8" lengthAdjust="spacingAndGlyphs">341 ms buffer</text>
<rect x="18.5" y="471.5" width="1010" height="49" fill="#000" stroke="#3c3c3c" stroke-width="1"/>
<defs>
<pattern id="ps" x="19" y="0" width="2.95" height="30" patternUnits="userSpaceOnUse"><rect x="0" y="0" width="2.95" height="30" fill="#0c0c0c"/><rect x="0.35" y="0" width="1.25" height="30" fill="#fff"/></pattern>
<linearGradient id="fb" x1="0" y1="0" x2="0" y2="1">
<stop offset="0" stop-color="#3a340c"/><stop offset=".07" stop-color="#75691a"/><stop offset=".2" stop-color="#70661c"/><stop offset=".36" stop-color="#266a58"/><stop offset=".5" stop-color="#146a62"/><stop offset=".64" stop-color="#266a58"/><stop offset=".8" stop-color="#70661c"/><stop offset=".93" stop-color="#75691a"/><stop offset="1" stop-color="#3a340c"/></linearGradient>
<mask id="ms"><rect x="19" y="482" width="1005" height="28" fill="url(#ps)"/></mask>
</defs>
<rect x="19" y="482.4" width="1005" height="26.8" fill="url(#fb)" mask="url(#ms)"/>
</svg>
 </div>

 <div class="btn on" style="left:5.8px;top:533.7px;width:63px;height:22px;line-height:21.6px">CH1</div>
 <div class="btn on" style="left:80.2px;top:533.7px;width:62.5px;height:22px;line-height:21.6px">CH2</div>
 <div class="btn" style="left:154.3px;top:533.7px;width:62.5px;height:22px;line-height:21.6px">CH1-CH2</div>
 <div class="spin" style="left:5px;top:561.2px;width:63.4px;height:24px"><span class="v">200 mV/div</span><span class="ar"><i class="u"></i><i class="d"></i></span></div>
 <div class="spin" style="left:79.5px;top:561.2px;width:63px;height:24px"><span class="v">200 mV/div</span><span class="ar"><i class="u"></i><i class="d"></i></span></div>
 <div class="spin" style="left:153.5px;top:561.2px;width:63px;height:24px"><span class="v">500 mV/div</span><span class="ar"><i class="u"></i><i class="d"></i></span></div>
 <svg class="abs gear" style="left:233px;top:535.5px" width="18" height="18" viewBox="-9 -9 18 18"><use href="#gear"/></svg>
 <svg class="abs" style="left:229.5px;top:563.5px" width="24" height="18" viewBox="0 0 24 18"><rect x="1" y="3" width="22" height="13.5" rx="2" fill="#f2f2f2" stroke="#aaa" stroke-width=".8"/><rect x="4" y="1.2" width="5" height="2.5" fill="#e2e2e2" stroke="#aaa" stroke-width=".6"/><circle cx="15.2" cy="9.6" r="5.2" fill="#b4b4b4" stroke="#8e8e8e" stroke-width=".9"/><circle cx="15.2" cy="9.6" r="2.6" fill="#4a4a4a"/><circle cx="15.9" cy="8.8" r=".8" fill="#ddd"/></svg>

 <div class="btn" style="left:431px;top:533.4px;width:40px;height:22.2px"><svg width="16" height="16" viewBox="0 0 16 16" style="margin-top:2.4px"><path d="M0.6 5H15.4M0.6 11H15.4M5 0.6V15.4M11 0.6V15.4" stroke="#111" stroke-width="1" stroke-dasharray="1.2 1" fill="none"/></svg></div>
 <svg class="abs gear" style="left:473.5px;top:535px" width="18" height="18" viewBox="-9 -9 18 18"><use href="#gear"/></svg>
 <div class="spin" style="left:431px;top:561.2px;width:63px;height:24px"><span class="v">1 ms/div</span><span class="ar"><i class="u"></i><i class="d"></i></span></div>

 <div class="abs" style="left:661px;top:539.7px;font-weight:bold;font-size:8.4px;letter-spacing:.42px">Trigger</div>
 <svg class="abs gear" style="left:698px;top:536px" width="18" height="18" viewBox="-9 -9 18 18"><use href="#gear"/></svg>
 <div class="abs" style="left:667px;top:566px;width:11px;height:11px;border-radius:50%;background:radial-gradient(circle at 45% 40%,#2038a0,#0a1a78 60%,#06105a);box-shadow:0 1px 1px #fff"></div>
 <div class="abs" style="left:684.5px;top:566.7px;font-weight:bold;font-size:8.4px;letter-spacing:.5px">Armed</div>
</div>
<svg width="0" height="0" style="position:absolute"><defs>
 <linearGradient id="gg" x1="0" y1="0" x2="0" y2="1"><stop offset="0" stop-color="#ececec"/><stop offset=".45" stop-color="#b8b8b8"/><stop offset="1" stop-color="#8e8e8e"/></linearGradient>
 <g id="gear"><path fill="url(#gg)" stroke="#8c8c8c" stroke-width=".7" d="M6.31 -1.05 L8.35 -0.91 L8.35 0.91 L6.31 1.05 L5.99 2.24 L7.68 3.39 L6.78 4.96 L4.94 4.07 L4.07 4.94 L4.96 6.78 L3.39 7.68 L2.24 5.99 L1.05 6.31 L0.91 8.35 L-0.91 8.35 L-1.05 6.31 L-2.24 5.99 L-3.39 7.68 L-4.96 6.78 L-4.07 4.94 L-4.94 4.07 L-6.78 4.96 L-7.68 3.39 L-5.99 2.24 L-6.31 1.05 L-8.35 0.91 L-8.35 -0.91 L-6.31 -1.05 L-5.99 -2.24 L-7.68 -3.39 L-6.78 -4.96 L-4.94 -4.07 L-4.07 -4.94 L-4.96 -6.78 L-3.39 -7.68 L-2.24 -5.99 L-1.05 -6.31 L-0.91 -8.35 L0.91 -8.35 L1.05 -6.31 L2.24 -5.99 L3.39 -7.68 L4.96 -6.78 L4.07 -4.94 L4.94 -4.07 L6.78 -4.96 L7.68 -3.39 L5.99 -2.24Z"/><circle r="3.4" fill="#d2d2d2" stroke="#868686" stroke-width="1.8"/><circle r="1.5" fill="#b4b4b4"/></g>
</defs></svg>
<style>
#lm{position:absolute;left:754px;top:0;width:262px;height:205px;background:#292929;overflow:hidden}
#lmh{position:absolute;left:0;top:0;width:262px;height:42px;background:#5b5b5b;border:1px solid #3f8ec6;border-top:0}
#lmh .big{position:absolute;left:4.2px;top:-7.2px;font-weight:bold;font-size:10.2px;color:#fff;white-space:nowrap}
#lmh .sub{position:absolute;left:3.8px;top:6.2px;font-size:6.9px;color:#dedede;white-space:nowrap}
.lmb{position:absolute;background:#7b8398;}
#lmp{position:absolute;left:6px;top:51px;width:250px;height:150.5px;border-radius:6px;background:linear-gradient(#686868 0,#5e5e5e 15%,#545454 60%,#4a4a4a 90%,#3c3c3c 96%,#2f2f2f 100%);box-shadow:inset 0 1px 0 #8a8a8a, inset 1px 0 0 #5a5a5a,0 1px 2px #111}
.mtr{position:absolute;left:13px;width:186px;height:18px;background:#343434;box-shadow:inset 0 1px 1px #222}
.mtr .in{position:absolute;left:7.5px;top:1.6px;width:171.5px;height:14px;background:#1b1b1b}
.mtr .lr{position:absolute;left:1.6px;top:3.4px;font-size:5.8px;line-height:6.4px;color:#d8d8d8}
.mtr .bar{position:absolute;left:7.7px;top:3.3px;height:6px;background:#ee8b09}
.lsc{position:absolute;left:0;width:250px;height:10px;font-size:8.3px;color:#cdcdcd;white-space:nowrap}
.lsc span{position:absolute;top:0;transform:scaleX(.89);transform-origin:0 0}
.sld{position:absolute;left:13px;width:186px;height:10.4px;background:#434343;box-shadow:inset 0 1px 1px #2a2a2a;margin-top:-.4px}
.sld:before{content:"";position:absolute;left:3.5px;right:3.5px;top:1.2px;height:5.2px;background:linear-gradient(#2b2b2b,#313131)}
.sld .th{position:absolute;left:86px;top:0;width:14px;height:10.4px;border-radius:1.5px;background:linear-gradient(90deg,#d6d6d6 0,#a9a9a9 40%,#6a6a6a 47%,#bdbdbd 55%,#8c8c8c 100%);box-shadow:0 1px 1px #222}
.ltx{position:absolute;font-size:9.2px;color:#c6c6c6;white-space:nowrap}
.lval{position:absolute;background:#212121;color:#e2e2e2;font-size:9.3px;text-align:center;white-space:nowrap;height:11.5px;line-height:13px;border-radius:1px}
.lbt{position:absolute;margin-top:-.8px;height:11.5px;line-height:12.2px;border-radius:2px;background:linear-gradient(#4a4238,#33291c 50%,#2a2a2a);border:1px solid #2a2a2a;box-shadow:0 0 0 .5px #6a6a6a;color:#f0a020;text-shadow:0 0 2px #c06a00;font-size:8.8px;font-weight:bold;text-align:center}
.vsc{position:absolute;right:32.6px;width:20px;text-align:right;font-size:8.4px;color:#dedede;height:10px;line-height:10px;transform:scaleX(.8);transform-origin:100% 0}
.vsc:after{content:"";position:absolute;right:-5.6px;top:4.6px;width:3.2px;border-top:1px solid #262626}
</style>
<div id="lm">
 <div id="lmh">
  <div class="big">LoudMax 64bit</div>
  <div class="sub">LoudMax 64bit by Thomas Mun.. Latency: 1.3ms</div>
  <div class="abs" style="left:71.2px;top:15.3px;width:49px;height:23.2px;background:#1f1f1f"></div>
  <div class="abs" style="left:71.9px;top:26px;width:23.2px;height:11.8px;background:#2ea7f6"></div>
  <div class="abs" style="left:123.6px;top:15.3px;width:49px;height:23.2px;background:#1f1f1f"></div>
  <div class="abs" style="left:123.8px;top:15.3px;width:24.4px;height:3.2px;background:#ea1a6c"></div>
  <div class="abs" style="left:124.3px;top:28px;width:23.6px;height:10px;background:#f7a722"></div>
  <div class="lmb" style="left:212.6px;top:0;width:14.1px;height:13.8px"><svg width="14" height="14" viewBox="0 0 14 14" style="position:absolute;left:0;top:0"><text x="1.5" y="7.7" font-family="Liberation Sans, sans-serif" font-weight="bold" font-size="9.6" fill="#14141c" stroke="#14141c" stroke-width=".35" textLength="11.2" lengthAdjust="spacingAndGlyphs">ISO</text></svg></div>
  <div class="lmb" style="left:228.9px;top:0;width:14.6px;height:13.8px"><svg width="14" height="14" viewBox="-7 -7 14 14" style="position:absolute;left:-.2px;top:-4px"><path d="M3.97 -1.01 L5.53 -0.90 L5.53 0.90 L3.97 1.01 L3.52 2.10 L4.55 3.27 L3.27 4.55 L2.10 3.52 L1.01 3.97 L0.90 5.53 L-0.90 5.53 L-1.01 3.97 L-2.10 3.52 L-3.27 4.55 L-4.55 3.27 L-3.52 2.10 L-3.97 1.01 L-5.53 0.90 L-5.53 -0.90 L-3.97 -1.01 L-3.52 -2.10 L-4.55 -3.27 L-3.27 -4.55 L-2.10 -3.52 L-1.01 -3.97 L-0.90 -5.53 L0.90 -5.53 L1.01 -3.97 L2.10 -3.52 L3.27 -4.55 L4.55 -3.27 L3.52 -2.10Z" fill="none" stroke="#111" stroke-width="1.2"/><circle r="1.8" fill="none" stroke="#111" stroke-width="1.1"/></svg></div>
  <div class="lmb" style="left:244.9px;top:0;width:14.3px;height:13.8px"><svg width="14" height="14" viewBox="0 0 14 14" style="position:absolute;left:0;top:-4.8px"><path d="M2.4 1 L11.8 12 M11.8 1 L2.4 12" stroke="#111" stroke-width="2.5"/></svg></div>
  <div class="lmb" style="left:176.7px;top:15.6px;width:20.3px;height:20.2px;background:#8cd63e"><svg width="20" height="20" viewBox="0 0 20 20"><path d="M6.6 5.4 A6.4 6.4 0 1 0 13.4 5.4" fill="none" stroke="#0a2a00" stroke-width="1.8"/><path d="M10 3.6 V10.8" stroke="#0a2a00" stroke-width="1.8"/></svg></div>
  <div class="lmb" style="left:198.3px;top:15.6px;width:18.9px;height:20.2px"><svg width="19" height="20" viewBox="0 0 19 20"><path d="M4.2 5.4 C8.7 2.9 15.7 3.9 16.7 8.4 C17.2 12.4 12.7 15.4 9.2 17.2 L7.4 15.8 C10.7 13.9 12.7 11.4 11.7 8.9 C10.7 6.4 7.2 5.9 4.2 5.4Z" fill="#93cde2"/><circle cx="5.1" cy="9.9" r="2.7" fill="#b8e860"/></svg></div>
  <div class="lmb" style="left:218.9px;top:15.6px;width:19.1px;height:20.2px"><svg width="19" height="20" viewBox="0 0 19 20"><path d="M4.5 6.9 H8.6 V13.7 H4.5 Z M8.6 6.9 L14.2 3.7 V16.8 L8.6 13.7" fill="none" stroke="#1a1a1a" stroke-width="1.25"/></svg></div>
  <div class="lmb" style="left:239.7px;top:15.6px;width:19.5px;height:20.2px"><svg width="19" height="20" viewBox="0 0 19 20"><circle cx="9.8" cy="10" r="7.2" fill="none" stroke="#111" stroke-width="1.2"/><path d="M6.3 12.5 C5.5 9.5 7 7 9 6.6 M12.9 12.5 C13.7 9.5 12.2 7 10.2 6.6" fill="none" stroke="#111" stroke-width="1"/><circle cx="6.3" cy="13" r=".9" fill="none" stroke="#111" stroke-width=".7"/><circle cx="12.9" cy="13" r=".9" fill="none" stroke="#111" stroke-width=".7"/><circle cx="9.6" cy="6.4" r=".8" fill="none" stroke="#111" stroke-width=".7"/></svg></div>
 </div>
 <div id="lmp">
  <div class="mtr" style="top:9.6px"><div class="in"></div><div class="lr">L<br>R</div><div class="bar" style="width:123.2px"></div></div>
  <div class="lsc" style="top:32px"><span style="left:13.0px">–30</span><span style="left:30.0px">–27</span><span style="left:47.1px">–24</span><span style="left:64.1px">–21</span><span style="left:81.1px">–18</span><span style="left:98.2px">–15</span><span style="left:115.2px">–12</span><span style="left:134.5px">–9</span><span style="left:151.5px">–6</span><span style="left:168.6px">–3</span><span style="left:189.8px">0</span></div>
  <div class="sld" style="top:45.2px"><div class="th" style="left:86px"></div></div>
  <div class="ltx" style="left:12.6px;top:67.6px">Thresh:</div>
  <div class="lval" style="left:46px;top:67px;width:24.3px">-15.0</div>
  <div class="ltx" style="left:72.6px;top:67.6px">dB</div>
  <div class="lbt" style="left:86.6px;top:67px;width:26px">Link</div>
  <div class="lbt" style="left:115.9px;top:67px;width:21.7px">ISP</div>
  <div class="ltx" style="left:141.8px;top:67.6px">Out:</div>
  <div class="lval" style="left:162px;top:67px;width:24.3px">-15.0</div>
  <div class="ltx" style="left:188.5px;top:67.6px">dB</div>
  <div class="sld" style="top:89.8px"><div class="th" style="left:86px"></div></div>
  <div class="lsc" style="top:103px"><span style="left:13.0px">–30</span><span style="left:30.0px">–27</span><span style="left:47.1px">–24</span><span style="left:64.1px">–21</span><span style="left:81.1px">–18</span><span style="left:98.2px">–15</span><span style="left:115.2px">–12</span><span style="left:134.5px">–9</span><span style="left:151.5px">–6</span><span style="left:168.6px">–3</span><span style="left:189.8px">0</span></div>
  <div class="mtr" style="top:116px"><div class="in"></div><div class="lr">L<br>R</div><div class="bar" style="width:86.5px;top:4px;height:5px"></div></div>
  <div class="abs" style="left:223px;top:9.6px;width:13.5px;height:124.6px;background:#27323b;box-shadow:inset 0 1px 1px #1a1a1a"></div>
  <div class="abs" style="left:225.2px;top:13px;width:9.2px;height:119px;background:#1e1e1e"></div>
  <div class="abs" style="left:225.6px;top:13.6px;width:8.6px;height:50px;background:#ee680a"></div>
  <div class="vsc" style="top:10.2px">0</div><div class="vsc" style="top:21.8px">1</div><div class="vsc" style="top:33.3px">2</div><div class="vsc" style="top:44.9px">4</div><div class="vsc" style="top:56.5px">6</div><div class="vsc" style="top:68.1px">9</div><div class="vsc" style="top:79.6px">12</div><div class="vsc" style="top:91.2px">15</div><div class="vsc" style="top:102.8px">18</div><div class="vsc" style="top:114.3px">24</div><div class="vsc" style="top:125.9px">30</div>
  <svg class="abs" style="left:90px;top:130px" width="80" height="22" viewBox="850 181 80 22"><defs><linearGradient id="lg" x1="0" y1="0" x2="0" y2="1"><stop offset="0" stop-color="#f4b070"/><stop offset=".55" stop-color="#e88a2a"/><stop offset="1" stop-color="#b05408"/></linearGradient></defs><g font-family="Liberation Sans, sans-serif" fill="url(#lg)" stroke="#5a2a00" stroke-width=".25"><text x="855.6" y="197.6" font-size="10.9" textLength="28.3" lengthAdjust="spacingAndGlyphs">Loud</text><text x="884.6" y="197.6" font-size="13" textLength="13.9" lengthAdjust="spacingAndGlyphs">M</text><text x="899.1" y="197.6" font-size="7.6" textLength="14.1" lengthAdjust="spacingAndGlyphs">AX</text></g></svg>
 </div>
</div>
<style>
#sp{position:absolute;left:712px;top:206px;width:330px;height:400px;background:#cfcfcf;box-shadow:-1px 0 3px rgba(0,0,0,.25);overflow:hidden}
#sp .ab{position:absolute}
#spt{position:absolute;left:0;top:0;width:330px;height:18.6px;background:#fff}
#spt .t{position:absolute;left:17.8px;top:2.8px;font-size:9.6px;color:#000;white-space:nowrap;transform:scaleX(.925);transform-origin:0 0}
.tab{position:absolute;top:28.9px;height:22.7px;width:88.6px;border:1px solid #8c8c8c;border-left-color:#727272;border-right:0;background:linear-gradient(#f6f6f6,#ebebeb 50%,#dedede 55%,#d6d6d6);font-weight:bold;font-size:12.4px;color:#b2b2b2;text-align:center;line-height:22px;white-space:nowrap;box-shadow:0 1px 0 #eee;overflow:hidden}
.tab.on{background:linear-gradient(#9c9c9c,#bcbcbc 22%,#c3c3c3 40%);color:#b4b4b4;border-color:#6e6e6e;box-shadow:inset 0 1px 2px rgba(0,0,0,.3),0 1px 0 #eee}
.tab2{position:absolute;top:74.4px;height:17.4px;padding-top:1px;width:70.6px;border:1px solid #9a9a9a;border-left-color:#8a8a8a;border-right:0;background:linear-gradient(#f4f4f4,#e8e8e8 50%,#dcdcdc 55%,#d4d4d4);font-size:8.35px;color:#b6b6b6;text-align:center;line-height:15.8px;white-space:nowrap;box-shadow:0 1px 0 #eee}
.tab2.on{background:linear-gradient(#a0a0a0,#bebebe 28%,#c4c4c4 45%);color:#b8b8b8;border-color:#777;box-shadow:inset 0 1px 2px rgba(0,0,0,.3),0 1px 0 #eee}
.pnl{position:absolute;border:1px solid #ababab;box-shadow:0 1px 0 #dadada;background:#c3c3c3}
.wf{position:absolute;background:#fff;border:1px solid #9a9a9a}
.sb{position:absolute;border:1px solid #8e8e8e;border-radius:3.5px;background:linear-gradient(#fbfbfb,#ececec 45%,#dcdcdc 55%,#d0d0d0);box-shadow:0 1px 0 #ececec;text-align:center;font-size:8.35px;color:#111;white-space:nowrap}
.cb{position:absolute;left:187.2px;width:11.4px;height:11.2px;border:1px solid #979797;border-radius:2px;background:linear-gradient(#cfcfcf,#ededed);box-shadow:inset 0 1px 1px rgba(0,0,0,.15)}
.cl{position:absolute;left:203px;font-size:8.35px;white-space:nowrap;color:#111}
.rb{position:absolute;left:245.9px;width:11px;height:11px;border:1px solid #979797;border-radius:50%;background:linear-gradient(#d4d4d4,#f4f4f4);box-shadow:inset 0 1px 1px rgba(0,0,0,.15)}
.rl{position:absolute;left:261.3px;font-size:8.35px;white-space:nowrap;color:#111}
.big{position:absolute;font-weight:bold;color:#000;white-space:nowrap;text-align:right}
.sar{position:absolute;width:12px;background:linear-gradient(90deg,#ececec,#d4d4d4);border:1px solid #a6a6a6;border-left:1px solid #b4b4b4}
.sar:before{content:"";position:absolute;left:0;right:0;top:50%;border-top:1px solid #b0b0b0}
.sar i{position:absolute;left:50%;margin-left:-4.2px;width:0;height:0;border-left:4.2px solid transparent;border-right:4.2px solid transparent}
.sar i.u{top:25%;margin-top:-3.4px;border-bottom:4.6px solid #2a2a2a}
.sar i.d{top:75%;margin-top:-2px;border-top:4.6px solid #2a2a2a}
</style>
<div style="position:absolute;left:711.6px;top:205.4px;width:320px;height:2px;background:#fff"></div>
<div style="position:absolute;left:711px;top:528px;width:1px;height:60px;background:#a0a0a0"></div>
<div id="sp">
 <div id="spt">
  <svg class="ab" style="left:2.2px;top:2.4px" width="13" height="13" viewBox="0 0 13 13"><rect x="0.6" y="0.6" width="11.8" height="11.8" rx="1.8" fill="#e9f0f8" stroke="#8d99a8" stroke-width="1.1"/><path d="M6.6 1.4 C8.8 2.8 9.4 4.8 8 6.4 C6.6 7.2 4.4 6.4 4.6 4.6 C4.8 3.2 6.2 2.8 6.6 1.4Z" fill="#ecb485"/><path d="M5.8 3.6 C6.8 4.2 6.8 5 6.2 5.8" stroke="#fbe6d2" stroke-width=".7" fill="none"/><path d="M3.2 7.3 H9.6 C10.8 7.4 10.6 9 9.4 9.2" stroke="#6d737c" stroke-width=".8" fill="none"/><path d="M3.4 8.5 H9 L8.4 10.4 H2.8Z" fill="#6f91cc"/></svg>
  <div class="t">SPEAKER on Haut-parleurs (MOTU Pro Audio)</div>
  <div class="ab" style="left:268px;top:8.8px;width:8px;height:1.2px;background:#222"></div>
  <div class="ab" style="left:303px;top:5px;width:9px;height:8px;border:1px solid #c4c4c4"></div>
 </div>
 <div class="ab" style="left:0;top:18.6px;width:330px;height:6px;background:linear-gradient(#e9e9e9,#cfcfcf)"></div>
 <div class="tab on" style="left:4px;width:87.6px;border-radius:4px 0 0 4px">Tones</div>
 <div class="tab" style="left:91.5px">Multitone</div>
 <div class="tab" style="left:179.8px">Noise</div>
 <div class="tab" style="left:267.9px">Sweep</div>
 <div class="tab2 on" style="left:4px;border-radius:3px 0 0 3px">Sine</div>
 <div class="tab2" style="left:74px">Square</div>
 <div class="tab2" style="left:144.2px">Tone burst</div>
 <div class="tab2" style="left:214.4px">CEA-2010 Burst</div>
 <div class="tab2" style="left:284.6px">JTest</div>

 <div class="pnl" style="left:4px;top:95.4px;width:340px;height:133.8px"></div>
 <div class="ab" style="left:10px;top:105px;font-size:8.35px;white-space:nowrap">Frequency Hz</div>
 <div class="wf" style="left:7.4px;top:117.4px;width:153.9px;height:53px"></div>
 <div class="big" style="left:8.3px;top:125.1px;width:149.5px;font-size:33.2px;line-height:38px">1 000</div>
 <div class="sar" style="left:160.3px;top:117.4px;height:53px"><i class="u"></i><i class="d"></i></div>
 <div class="sb" style="left:8.3px;top:171.6px;width:80.3px;height:17.6px;line-height:17.4px">Prev. 1/3 Oct.</div>
 <div class="sb" style="left:92.3px;top:171.6px;width:80.3px;height:17.6px;line-height:17.4px">Next 1/3 Oct.</div>
 <div class="cb" style="top:120.5px"></div><div class="cl" style="top:121.5px;letter-spacing:.09px">Lock frequency to RTA FFT (</div>
 <div class="cb" style="top:139px"></div><div class="cl" style="top:140px;letter-spacing:.02px">Add harmonic distortion</div>
 <div class="cb" style="top:156.6px"></div><div class="cl" style="top:157.6px;letter-spacing:.14px">Frequency tracks cursor</div>
 <div class="cb" style="top:174.5px"></div><div class="cl" style="top:175.6px;letter-spacing:.07px">Add dither</div>
 <div class="wf" style="left:263.3px;top:171.6px;width:80px;height:17px"></div>
 <div class="ab" style="left:266.6px;top:175.3px;font-size:8.35px;white-space:nowrap">16 bits</div>

 <div class="pnl" style="left:4px;top:258.4px;width:340px;height:71.2px"></div>
 <div class="wf" style="left:7.5px;top:262px;width:222px;height:64.4px"></div>
 <div class="big" style="left:8.5px;top:275.9px;width:216.8px;font-size:33.6px;line-height:38px">-8,00 dBFS</div>
 <div class="ab" style="left:180px;top:264.1px;width:45px;text-align:right;font-size:8.35px;white-space:nowrap">RMS</div>
 <div class="ab" style="left:140px;top:315.6px;width:85px;text-align:right;font-size:8.35px;white-space:nowrap">-8,00 dBFS pk</div>
 <div class="sar" style="left:228.3px;top:262px;height:64.4px;width:13.2px"><i class="u"></i><i class="d"></i></div>
 <div class="rb" style="top:264px"></div><div class="rl" style="top:264.6px">dBu</div>
 <div class="rb" style="top:279.4px"></div><div class="rl" style="top:280px">dBV</div>
 <div class="rb" style="top:295.2px"></div><div class="rl" style="top:295.8px">Volts</div>
 <div class="rb" style="top:311.2px"></div><div class="rl" style="top:311.8px">dBFS</div>
 <div class="ab" style="left:248.6px;top:314.4px;width:4.6px;height:4.6px;border-radius:50%;background:#111"></div>
 <div class="sb" style="left:293.6px;top:263.4px;width:60px;height:27px;border-radius:4px;text-align:left;line-height:11px;padding:3.2px 0 0 3.6px">Calibrate<br>&nbsp;&nbsp;&nbsp;&nbsp;level</div>
 <div class="ab" style="left:290.2px;top:297px;font-size:8.35px;white-space:nowrap">FS sine Vrms</div>
 <div class="wf" style="left:290.2px;top:309.4px;width:60px;height:15px"></div>
 <div class="ab" style="left:291.2px;top:310.4px;width:0;height:0;border-top:6px solid #444;border-right:6px solid transparent"></div>
 <div class="ab" style="left:299px;top:312px;font-size:8.35px;white-space:nowrap">5,817</div>

 <div class="ab" style="left:4.8px;top:343px;width:340px;height:60px;border-radius:4px;background:#f4f4f4;border:1px solid #c4c4c4"></div>
 <div class="ab" style="left:8.4px;top:346.4px;width:340px;height:60px;border-radius:3px;background:#282828;overflow:hidden">
  <svg width="340" height="60" viewBox="720.4 552.4 340 60" style="position:absolute;left:0;top:0"><path d="M720.0 598.3 L721.0 594.7 L722.0 591.2 L723.0 587.7 L724.0 584.3 L725.0 581.1 L726.0 578.0 L727.0 575.0 L728.0 572.3 L729.0 569.8 L730.0 567.5 L731.0 565.5 L732.0 563.8 L733.0 562.4 L734.0 561.3 L735.0 560.5 L736.0 560.0 L737.0 559.8 L738.0 560.0 L739.0 560.5 L740.0 561.3 L741.0 562.4 L742.0 563.8 L743.0 565.5 L744.0 567.5 L745.0 569.8 L746.0 572.3 L747.0 575.0 L748.0 578.0 L749.0 581.1 L750.0 584.3 L751.0 587.7 L752.0 591.2 L753.0 594.7 L754.0 598.3 L755.0 601.8 L756.0 605.4 L757.0 608.9 L758.0 612.3 L759.0 615.6 L760.0 618.7 L761.0 621.7 L762.0 624.5 L763.0 627.1 L764.0 629.4 L765.0 631.5 L766.0 633.3 L767.0 634.8 L768.0 636.0 L769.0 636.9 L770.0 637.5 L771.0 637.8 L772.0 637.7 L773.0 637.3 L774.0 636.6 L775.0 635.6 L776.0 634.2 L777.0 632.6 L778.0 630.7 L779.0 628.5 L780.0 626.1 L781.0 623.4 L782.0 620.5 L783.0 617.5 L784.0 614.3 L785.0 610.9 L786.0 607.5 L787.0 604.0 L788.0 600.4 L789.0 596.8 L790.0 593.3 L791.0 589.8 L792.0 586.3 L793.0 583.0 L794.0 579.8 L795.0 576.8 L796.0 573.9 L797.0 571.3 L798.0 568.9 L799.0 566.7 L800.0 564.8 L801.0 563.2 L802.0 561.9 L803.0 560.9 L804.0 560.2 L805.0 559.9 L806.0 559.8 L807.0 560.1 L808.0 560.7 L809.0 561.7 L810.0 562.9 L811.0 564.5 L812.0 566.3 L813.0 568.4 L814.0 570.8 L815.0 573.4 L816.0 576.2 L817.0 579.2 L818.0 582.4 L819.0 585.7 L820.0 589.1 L821.0 592.6 L822.0 596.1 L823.0 599.7 L824.0 603.3 L825.0 606.8 L826.0 610.2 L827.0 613.6 L828.0 616.8 L829.0 619.9 L830.0 622.8 L831.0 625.5 L832.0 628.0 L833.0 630.3 L834.0 632.2 L835.0 633.9 L836.0 635.3 L837.0 636.4 L838.0 637.2 L839.0 637.7 L840.0 637.8 L841.0 637.6 L842.0 637.1 L843.0 636.2 L844.0 635.1 L845.0 633.6 L846.0 631.9 L847.0 629.8 L848.0 627.6 L849.0 625.0 L850.0 622.3 L851.0 619.3 L852.0 616.2 L853.0 612.9 L854.0 609.6 L855.0 606.1 L856.0 602.5 L857.0 599.0 L858.0 595.4 L859.0 591.9 L860.0 588.4 L861.0 585.0 L862.0 581.7 L863.0 578.6 L864.0 575.6 L865.0 572.8 L866.0 570.3 L867.0 568.0 L868.0 565.9 L869.0 564.1 L870.0 562.7 L871.0 561.5 L872.0 560.6 L873.0 560.0 L874.0 559.8 L875.0 559.9 L876.0 560.3 L877.0 561.1 L878.0 562.1 L879.0 563.5 L880.0 565.2 L881.0 567.1 L882.0 569.3 L883.0 571.8 L884.0 574.5 L885.0 577.4 L886.0 580.4 L887.0 583.7 L888.0 587.0 L889.0 590.5 L890.0 594.0 L891.0 597.5 L892.0 601.1 L893.0 604.7 L894.0 608.2 L895.0 611.6 L896.0 614.9 L897.0 618.1 L898.0 621.1 L899.0 623.9 L900.0 626.6 L901.0 629.0 L902.0 631.1 L903.0 633.0 L904.0 634.5 L905.0 635.8 L906.0 636.8 L907.0 637.4 L908.0 637.8 L909.0 637.8 L910.0 637.4 L911.0 636.8 L912.0 635.8 L913.0 634.5 L914.0 633.0 L915.0 631.1 L916.0 629.0 L917.0 626.6 L918.0 623.9 L919.0 621.1 L920.0 618.1 L921.0 614.9 L922.0 611.6 L923.0 608.2 L924.0 604.7 L925.0 601.1 L926.0 597.5 L927.0 594.0 L928.0 590.5 L929.0 587.0 L930.0 583.7 L931.0 580.4 L932.0 577.4 L933.0 574.5 L934.0 571.8 L935.0 569.3 L936.0 567.1 L937.0 565.2 L938.0 563.5 L939.0 562.1 L940.0 561.1 L941.0 560.3 L942.0 559.9 L943.0 559.8 L944.0 560.0 L945.0 560.6 L946.0 561.5 L947.0 562.7 L948.0 564.1 L949.0 565.9 L950.0 568.0 L951.0 570.3 L952.0 572.8 L953.0 575.6 L954.0 578.6 L955.0 581.7 L956.0 585.0 L957.0 588.4 L958.0 591.9 L959.0 595.4 L960.0 599.0 L961.0 602.5 L962.0 606.1 L963.0 609.6 L964.0 612.9 L965.0 616.2 L966.0 619.3 L967.0 622.3 L968.0 625.0 L969.0 627.6 L970.0 629.8 L971.0 631.9 L972.0 633.6 L973.0 635.1 L974.0 636.2 L975.0 637.1 L976.0 637.6 L977.0 637.8 L978.0 637.7 L979.0 637.2 L980.0 636.4 L981.0 635.3 L982.0 633.9 L983.0 632.2 L984.0 630.3 L985.0 628.0 L986.0 625.5 L987.0 622.8 L988.0 619.9 L989.0 616.8 L990.0 613.6 L991.0 610.2 L992.0 606.8 L993.0 603.3 L994.0 599.7 L995.0 596.1 L996.0 592.6 L997.0 589.1 L998.0 585.7 L999.0 582.4 L1000.0 579.2 L1001.0 576.2 L1002.0 573.4 L1003.0 570.8 L1004.0 568.4 L1005.0 566.3 L1006.0 564.5 L1007.0 562.9 L1008.0 561.7 L1009.0 560.7 L1010.0 560.1 L1011.0 559.8 L1012.0 559.9 L1013.0 560.2 L1014.0 560.9 L1015.0 561.9 L1016.0 563.2 L1017.0 564.8 L1018.0 566.7 L1019.0 568.9 L1020.0 571.3 L1021.0 573.9 L1022.0 576.8 L1023.0 579.8 L1024.0 583.0 L1025.0 586.3 L1026.0 589.8 L1027.0 593.3 L1028.0 596.8 L1029.0 600.4 L1030.0 604.0" fill="none" stroke="#8e8e8e" stroke-width="1.4"/></svg>
 </div>
</div>
</body></html>
